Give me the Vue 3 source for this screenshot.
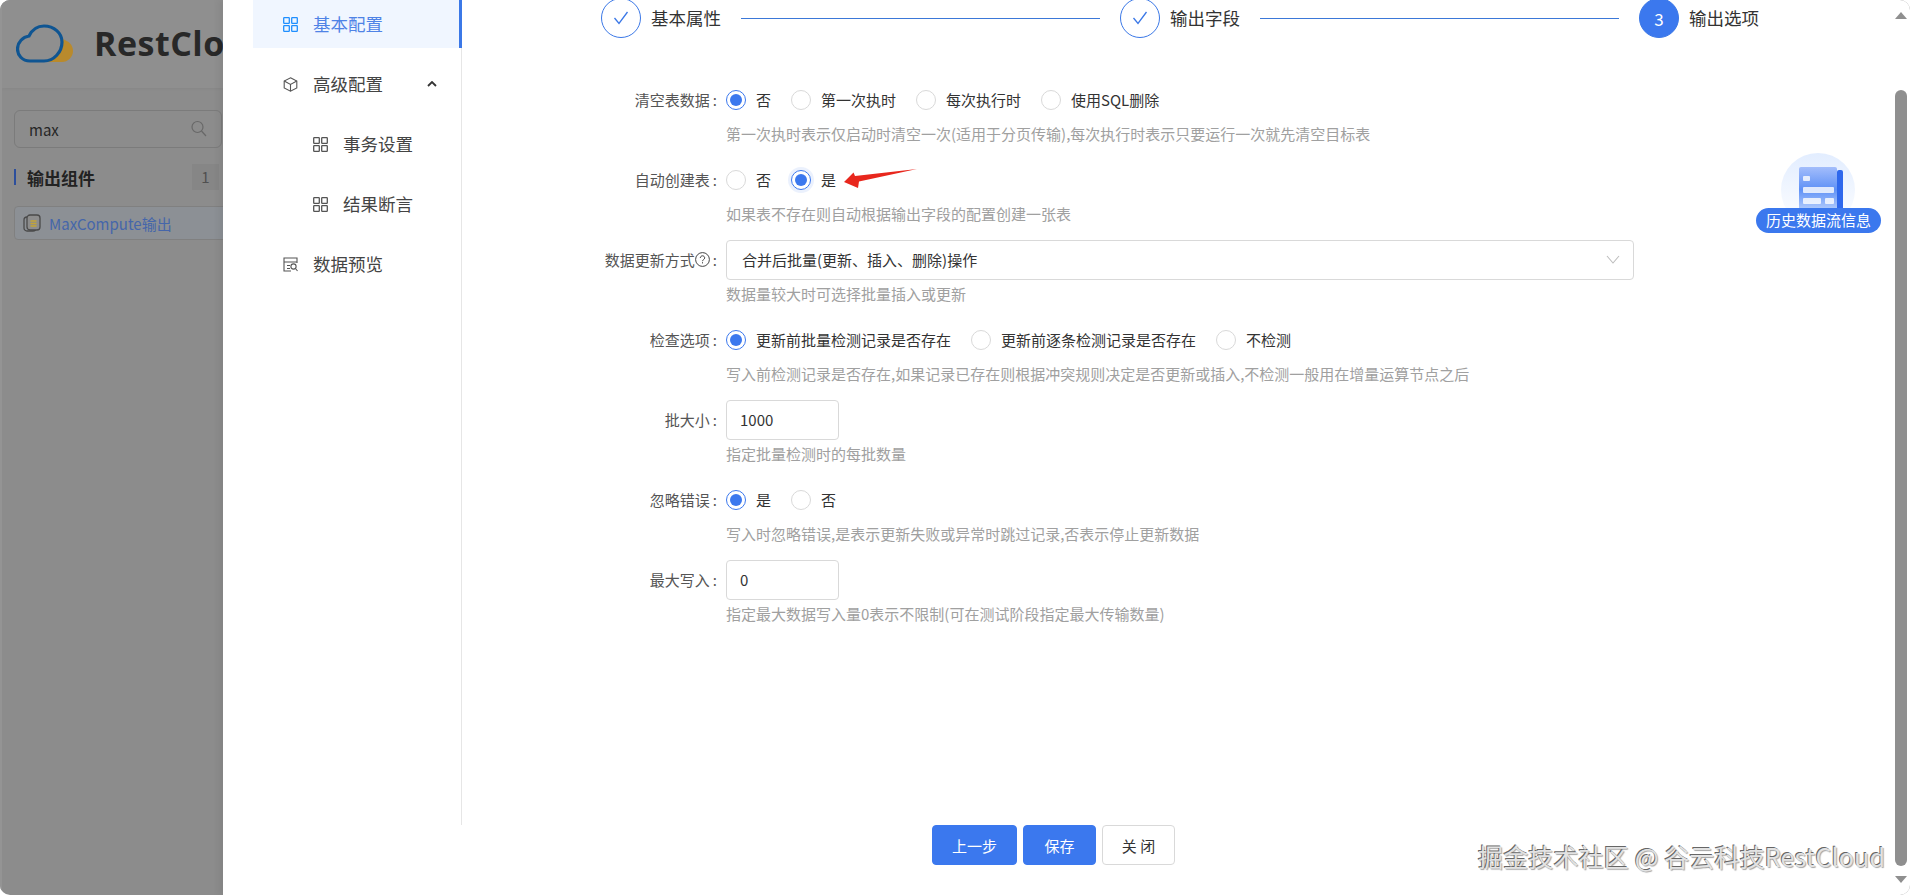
<script setup>
const menu = [
  { text: '基本配置', icon: 'grid', active: true },
  { text: '高级配置', icon: 'cube', arrow: true },
  { text: '事务设置', icon: 'grid', sub: true },
  { text: '结果断言', icon: 'grid', sub: true },
  { text: '数据预览', icon: 'table' }
]

const steps = [
  { text: '基本属性', done: true },
  { text: '输出字段', done: true },
  { text: '输出选项', num: 3 }
]

const fields = [
  { label: '清空表数据', type: 'radio', checked: 0, options: ['否', '第一次执时', '每次执行时', '使用SQL删除'], hint: '第一次执时表示仅启动时清空一次(适用于分页传输),每次执行时表示只要运行一次就先清空目标表' },
  { label: '自动创建表', type: 'radio', checked: 1, focus: true, options: ['否', '是'], hint: '如果表不存在则自动根据输出字段的配置创建一张表' },
  { label: '数据更新方式', help: true, type: 'select', value: '合并后批量(更新、插入、删除)操作', hint: '数据量较大时可选择批量插入或更新' },
  { label: '检查选项', type: 'radio', checked: 0, options: ['更新前批量检测记录是否存在', '更新前逐条检测记录是否存在', '不检测'], hint: '写入前检测记录是否存在,如果记录已存在则根据冲突规则决定是否更新或插入,不检测一般用在增量运算节点之后' },
  { label: '批大小', type: 'input', value: '1000', hint: '指定批量检测时的每批数量' },
  { label: '忽略错误', type: 'radio', checked: 0, options: ['是', '否'], hint: '写入时忽略错误,是表示更新失败或异常时跳过记录,否表示停止更新数据' },
  { label: '最大写入', type: 'input', value: '0', hint: '指定最大数据写入量0表示不限制(可在测试阶段指定最大传输数量)' }
]
</script>

<template>
  <div class="page">
    <aside class="app-side">
      <header class="app-head">
        <svg class="logo" width="58" height="40" viewBox="0 0 58 40" fill="none">
          <path d="M30 38C38 34 44 26 46 15 53 17 57 21 57 27 57 33 52 38 46 38z" fill="#b98a2c" />
          <path d="M14 37C6 37 1.500 31 1.500 25 1.500 18 7 13 13 12 16 6 21 2 28 2 38 2 46 9 46 18 46 28 38 37 28 37z" stroke="#0f5592" stroke-width="3.200" fill="#8f8f8f" />
        </svg>
        <span class="brand">RestCloud</span>
      </header>
      <div class="app-body">
        <div class="search">
          <span>max</span>
          <svg width="16" height="18" viewBox="0 0 16 18" fill="none" stroke="#686868" stroke-width="1.200">
            <circle cx="6.500" cy="7" r="5.500" />
            <path d="M10.500 11l4.500 5" />
          </svg>
        </div>
        <div class="group">
          <i class="group-bar" />
          <span class="group-title">输出组件</span>
          <span class="group-count">1</span>
        </div>
        <div class="comp">
          <svg width="18" height="18" viewBox="0 0 18 18" fill="none">
            <rect x="1" y="3" width="12" height="14" rx="3" stroke="#4a4a4a" stroke-width="1.300" />
            <rect x="4" y="1" width="13" height="15" rx="3" fill="#8d8d8d" stroke="#4a4a4a" stroke-width="1.300" />
            <path d="M7.500 7h6M7.500 9.500h6M7.500 12h6" stroke="#c4a535" stroke-width="1.400" />
          </svg>
          <span>MaxCompute输出</span>
        </div>
      </div>
    </aside>

    <section class="modal">
      <div class="modal-body">
        <nav class="menu">
          <div v-for="item in menu" :key="item.text" :class="['menu-item', { active: item.active, sub: item.sub }]">
            <svg v-if="item.icon === 'grid'" width="15" height="15" viewBox="0 0 15 15" fill="none" stroke="currentColor" stroke-width="1.300">
              <rect x=".7" y=".7" width="5.600" height="5.600" rx=".6" />
              <rect x="8.700" y=".7" width="5.600" height="5.600" rx=".6" />
              <rect x=".7" y="8.700" width="5.600" height="5.600" rx=".6" />
              <rect x="8.700" y="8.700" width="5.600" height="5.600" rx=".6" />
            </svg>
            <svg v-else-if="item.icon === 'cube'" width="15" height="15" viewBox="0 0 15 15" fill="none" stroke="currentColor" stroke-width="1.100">
              <path d="M7.500.8l6.300 3.300v6.800l-6.300 3.300-6.300-3.300V4.100z" />
              <path d="M1.200 4.100l6.300 3.400 6.300-3.400M7.500 7.500v6.700" />
            </svg>
            <svg v-else width="15" height="15" viewBox="0 0 15 15" fill="none" stroke="currentColor" stroke-width="1.100">
              <path d="M14 6V1H1v13h7M1 5h13M4 8.500h3M4 11.500h3" />
              <circle cx="10.500" cy="9.500" r="2.600" />
              <path d="M12.500 11.500l2 2.500" />
            </svg>
            <span class="menu-text">{{ item.text }}</span>
            <svg v-if="item.arrow" class="menu-arrow" width="10" height="6" viewBox="0 0 10 6" fill="none" stroke="#333" stroke-width="1.800">
              <path d="M1 5l4-4 4 4" />
            </svg>
          </div>
        </nav>

        <main class="content">
          <div class="steps">
            <template v-for="(step, i) in steps" :key="step.text">
              <div class="step">
                <span :class="['step-dot', { current: !step.done }]">
                  <svg v-if="step.done" width="16" height="14" viewBox="0 0 16 14" fill="none" stroke="#3b78e7" stroke-width="1.300">
                    <path d="M1.500 7l4.500 5.500L14.500 1" />
                  </svg>
                  <template v-else>{{ step.num }}</template>
                </span>
                <span class="step-text">{{ step.text }}</span>
              </div>
              <span v-if="i < steps.length - 1" class="step-line" />
            </template>
          </div>

          <form class="form">
            <div v-for="field in fields" :key="field.label" class="field">
              <label class="field-label">
                {{ field.label }}
                <svg v-if="field.help" class="help" width="15" height="15" viewBox="0 0 15 15" fill="none" stroke="#444">
                  <circle cx="7.500" cy="7.500" r="6.900" />
                  <path d="M5.300 6c0-1.400 1.100-2.200 2.200-2.200s2.200.8 2.200 2.100c0 1.700-2.200 1.600-2.200 3.300M7.500 10.200v1.200" />
                </svg>
                <span class="colon">:</span>
              </label>

              <div v-if="field.type === 'radio'" class="radios">
                <span v-for="(opt, i) in field.options" :key="opt" class="radio-opt">
                  <span :class="['radio', { on: i === field.checked, focus: field.focus && i === field.checked }]" />
                  <span class="opt-text">{{ opt }}</span>
                </span>
                <svg v-if="field.focus" class="mark" width="74" height="20" viewBox="0 0 74 20">
                  <path d="M0 13L9.500 3.500 11 7 73 0 15 12.500 14 19z" fill="#e8271d" />
                </svg>
              </div>

              <div v-else-if="field.type === 'select'" class="select">
                <span>{{ field.value }}</span>
                <svg width="14" height="9" viewBox="0 0 14 9" fill="none" stroke="#bdbdbd" stroke-width="1.100">
                  <path d="M1 1l6 7 6-7" />
                </svg>
              </div>

              <div v-else class="input">{{ field.value }}</div>

              <p class="hint">{{ field.hint }}</p>
            </div>
          </form>

          <div class="history">
            <svg width="76" height="64" viewBox="0 0 76 64">
              <defs>
                <linearGradient id="halo" x1="0" y1="0" x2="0" y2="1">
                  <stop offset="0" stop-color="#e2edff" />
                  <stop offset="1" stop-color="#ffffff" />
                </linearGradient>
                <linearGradient id="sheet" x1="0" y1="0" x2="0" y2="1">
                  <stop offset="0" stop-color="#a3bdfb" />
                  <stop offset=".45" stop-color="#5f91f6" />
                  <stop offset="1" stop-color="#cfe0ff" />
                </linearGradient>
              </defs>
              <circle cx="37" cy="37" r="37" fill="url(#halo)" />
              <rect x="56" y="17" width="6" height="47" rx="2" fill="#2f68ec" />
              <rect x="18" y="14" width="38" height="50" rx="2" fill="url(#sheet)" />
              <g fill="#ffffff" opacity=".8">
                <rect x="22" y="23" width="7" height="5" rx="1" />
                <rect x="22" y="34" width="31" height="6" rx="1" />
                <rect x="22" y="45" width="18" height="6" rx="1" />
                <rect x="44" y="45" width="9" height="6" rx="1" />
              </g>
            </svg>
            <span class="history-pill">历史数据流信息</span>
          </div>
        </main>
      </div>

      <footer class="modal-foot">
        <button type="button" class="btn primary wide">上一步</button>
        <button type="button" class="btn primary">保存</button>
        <button type="button" class="btn">关 闭</button>
      </footer>

      <div class="scrollbar">
        <i class="arrow-up" />
        <i class="thumb" />
        <i class="arrow-down" />
      </div>
    </section>

    <div class="watermark">掘金技术社区 @ 谷云科技RestCloud</div>
  </div>
</template>

<style>
html, body {
  margin: 0;
  background: #fff;
}
</style>

<style scoped>
.page {
  position: relative;
  display: flex;
  height: 100vh;
  min-height: 895px;
  border-radius: 10px;
  overflow: hidden;
  background: #8c8c8c;
  font-family: "Noto Sans CJK SC", "Noto Sans", sans-serif;
  font-size: 15px;
  color: #333;
}

.app-side {
  width: 223px;
  flex: none;
  overflow: hidden;
  box-sizing: border-box;
  border-left: 2px solid #949494;
}

.app-head {
  display: flex;
  align-items: center;
  height: 88px;
  padding-left: 14px;
  box-sizing: border-box;
  background: #8f8f8f;
  box-shadow: 0 1px 3px rgba(0, 0, 0, 0.04);
  white-space: nowrap;
}

.logo {
  flex: none;
}

.brand {
  margin-left: 20px;
  margin-top: -2px;
  font-family: "Open Sans", sans-serif;
  font-size: 34px;
  font-weight: 700;
  letter-spacing: 0.5px;
  color: #282828;
}

.app-body {
  padding: 22px 0 0 12px;
  width: 230px;
}

.search {
  display: flex;
  align-items: center;
  justify-content: space-between;
  width: 208px;
  height: 38px;
  box-sizing: border-box;
  padding: 0 14px;
  border: 1px solid #7b7b7b;
  border-radius: 6px;
  color: #262626;
}

.group {
  display: flex;
  align-items: center;
  width: 205px;
  height: 26px;
  margin-top: 16px;
}

.group-bar {
  width: 2px;
  height: 16px;
  background: #2d4f9c;
}

.group-title {
  flex: 1;
  margin-left: 11px;
  font-size: 17px;
  font-weight: 700;
  color: #222;
}

.group-count {
  width: 27px;
  line-height: 26px;
  text-align: center;
  background: #868686;
  color: #505050;
}

.comp {
  display: flex;
  align-items: center;
  gap: 8px;
  height: 32px;
  margin-top: 16px;
  padding-left: 8px;
  border: 1px solid #808080;
  border-radius: 4px;
  background: #8c9095;
  color: #4566aa;
}

.modal {
  position: relative;
  flex: 1;
  display: flex;
  flex-direction: column;
  min-width: 0;
  background: #fff;
  box-shadow: -5px 0 6px rgba(0, 0, 0, 0.05);
}

.modal-body {
  display: flex;
  height: 825px;
}

.menu {
  width: 209px;
  margin-left: 30px;
  flex: none;
  box-sizing: border-box;
  border-right: 1px solid #e6e6e6;
}

.menu-item {
  display: flex;
  align-items: center;
  gap: 15px;
  height: 48px;
  margin-bottom: 12px;
  padding-left: 30px;
  font-size: 17.500px;
  color: #444;
}

.menu-text {
  padding-bottom: 2px;
}

.menu-item svg {
  flex: none;
  color: #555;
}

.menu-item.sub {
  padding-left: 60px;
}

.menu-item.active {
  margin-right: -1px;
  background: #f0f6ff;
  border-right: 3px solid #3b78e7;
  color: #4f83e6;
}

.menu-item.active svg {
  color: #1f8fff;
}

.menu-arrow {
  margin-left: 29px;
}

.content {
  position: relative;
  flex: 1;
  min-width: 0;
}

.steps {
  display: flex;
  align-items: center;
  width: 1158px;
  margin: -2px 0 0 139px;
}

.step {
  display: flex;
  align-items: center;
  gap: 10px;
  flex: none;
}

.step-dot {
  display: flex;
  align-items: center;
  justify-content: center;
  width: 40px;
  height: 40px;
  box-sizing: border-box;
  border: 1px solid #3b78e7;
  border-radius: 50%;
  font-size: 17px;
  color: #fff;
}

.step-dot.current {
  background: #3b78ee;
}

.step-text {
  padding-bottom: 2px;
  font-size: 17.500px;
  color: #333;
}

.step-line {
  flex: 1;
  height: 1px;
  margin: 0 20px;
  background: #3b78d8;
}

.form {
  margin-top: 42px;
}

.field {
  position: relative;
  display: grid;
  grid-template-columns: 264px 1fr;
  grid-template-rows: 40px 1fr;
  height: 80px;
}

.field-label {
  display: flex;
  align-items: center;
  justify-content: flex-end;
  padding-bottom: 2px;
  color: #555;
  white-space: nowrap;
}

.help {
  margin-left: 0;
}

.colon {
  margin: 0 9px 0 3px;
}

.radios {
  display: flex;
  align-items: center;
}

.radio-opt {
  display: flex;
  align-items: center;
  gap: 10px;
  margin-right: 20px;
}

.opt-text {
  padding-bottom: 2px;
}

.radio {
  position: relative;
  width: 20px;
  height: 20px;
  box-sizing: border-box;
  border: 1px solid #d9d9d9;
  border-radius: 50%;
}

.radio.on {
  border-color: #3b78ee;
}

.radio.on::after {
  content: "";
  position: absolute;
  inset: 3px;
  border-radius: 50%;
  background: #3b78ee;
}

.radio.focus {
  box-shadow: 0 0 0 3px rgba(59, 120, 238, 0.1);
}

.mark {
  position: absolute;
  left: 382px;
  top: 9px;
}

.select {
  display: flex;
  align-items: center;
  justify-content: space-between;
  width: 908px;
  box-sizing: border-box;
  padding: 0 13px 2px 15px;
  border: 1px solid #d9d9d9;
  border-radius: 4px;
}

.input {
  display: flex;
  align-items: center;
  width: 113px;
  box-sizing: border-box;
  padding: 0 13px 2px;
  border: 1px solid #d9d9d9;
  border-radius: 4px;
}

.hint {
  grid-column: 2;
  margin: 0;
  line-height: 28px;
  color: #a0a0a0;
}

.history {
  position: absolute;
  top: 153px;
  right: 29px;
  width: 125px;
  display: flex;
  flex-direction: column;
  align-items: center;
}

.history-pill {
  width: 125px;
  margin-top: -9px;
  position: relative;
  line-height: 24px;
  padding-bottom: 1px;
  border-radius: 13px;
  background: #3b78ee;
  color: #fff;
  text-align: center;
}

.modal-foot {
  display: flex;
  justify-content: center;
  gap: 6px;
  padding-right: 26px;
}

.btn {
  width: 73px;
  height: 40px;
  padding: 0;
  border: 1px solid #d9d9d9;
  border-radius: 4px;
  background: #fff;
  font: inherit;
  color: #333;
}

.btn.primary {
  border-color: #3b78ee;
  background: #3b78ee;
  color: #fff;
}

.btn.wide {
  width: 85px;
}

.scrollbar {
  position: absolute;
  top: 0;
  bottom: 0;
  right: 3px;
  width: 12px;
  display: flex;
  flex-direction: column;
  align-items: center;
}

.thumb {
  width: 12px;
  height: 776px;
  margin-top: 71px;
  border-radius: 6px;
  background: #8f8f8f;
}

.arrow-up,
.arrow-down {
  width: 0;
  height: 0;
  border-left: 6px solid transparent;
  border-right: 6px solid transparent;
}

.arrow-up {
  margin-top: 12px;
  border-bottom: 7px solid #8f8f8f;
}

.arrow-down {
  margin-top: 10px;
  border-top: 7px solid #8f8f8f;
}

.watermark {
  position: absolute;
  left: 1478px;
  top: 838px;
  font-size: 25px;
  letter-spacing: 0.15px;
  line-height: 36px;
  color: #e2e2e2;
  text-shadow: -1px -1px 0 #666, 1px 1px 1px #a5a5a5;
  white-space: nowrap;
}
</style>
